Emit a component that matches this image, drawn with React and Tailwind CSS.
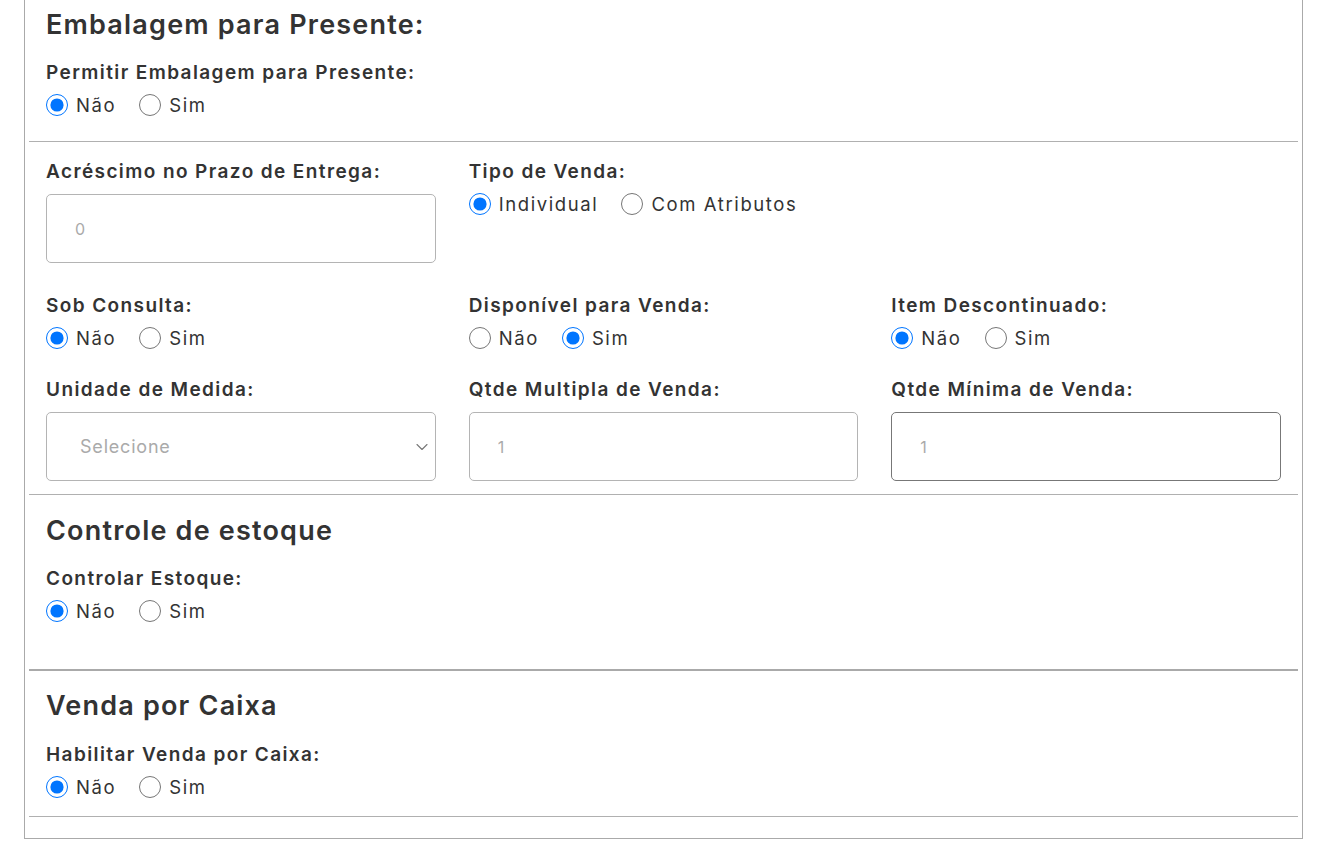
import { ChevronDown } from "lucide-react";

const font = { fontFamily: "Inter, 'Noto Sans', sans-serif" };

const RadioGroup = ({ name, options, checked }) => (
  <div className="flex items-center gap-[23px] h-6">
    {options.map((opt) => (
      <label
        key={opt}
        className="flex items-center gap-[8px] text-[18.5px] leading-6 tracking-[1.6px] text-[#333]"
      >
        <input
          type="radio"
          name={name}
          defaultChecked={opt === checked}
          className="w-[22px] h-[22px] accent-[#0075ff]"
        />
        {opt}
      </label>
    ))}
  </div>
);

const Label = ({ children }) => (
  <div className="text-[19px] leading-6 font-semibold tracking-[1.4px] text-[#333]">{children}</div>
);

const Heading = ({ children }) => (
  <h3 className="text-[27px] leading-[34px] font-semibold tracking-[1.2px] text-[#333]">{children}</h3>
);

const RadioField = ({ label, name, options = ["Não", "Sim"], checked = "Não" }) => (
  <div>
    <Label>{label}</Label>
    <div className="mt-[8px]">
      <RadioGroup name={name} options={options} checked={checked} />
    </div>
  </div>
);

const InputField = ({ label, placeholder, dark }) => (
  <div>
    <Label>{label}</Label>
    <input
      type="text"
      placeholder={placeholder}
      className={`mt-[10px] w-full h-[69px] rounded-[5px] border px-[28px] text-[16px] text-[#333] placeholder:text-[#aaa] outline-none ${
        dark ? "border-[#777]" : "border-[#b4b4b4]"
      }`}
    />
  </div>
);

export default function App() {
  return (
    <div className="min-h-screen bg-white" style={font}>
      <div className="ml-[24px] w-[1279px] border-x border-b border-[#aaa] px-[4px] pb-[21px]">
        {/* Embalagem */}
        <section className="px-[17px] pt-[8px] pb-[24px] border-b border-[#b0b0b0]">
          <Heading>Embalagem para Presente:</Heading>
          <div className="mt-[19px]">
            <RadioField label="Permitir Embalagem para Presente:" name="embalagem" />
          </div>
        </section>

        {/* Dados de venda */}
        <section className="px-[17px] pt-[18px] pb-[13px] border-b border-[#b0b0b0]">
          <div className="grid grid-cols-3 gap-x-[33px]">
            <InputField label="Acréscimo no Prazo de Entrega:" placeholder="0" />
            <RadioField
              label="Tipo de Venda:"
              name="tipo"
              options={["Individual", "Com Atributos"]}
              checked="Individual"
            />
            <div />
          </div>
          <div className="grid grid-cols-3 gap-x-[33px] mt-[31px]">
            <RadioField label="Sob Consulta:" name="consulta" />
            <RadioField label="Disponível para Venda:" name="disponivel" checked="Sim" />
            <RadioField label="Item Descontinuado:" name="descontinuado" />
          </div>
          <div className="grid grid-cols-3 gap-x-[33px] mt-[28px]">
            <div>
              <Label>Unidade de Medida:</Label>
              <div className="relative mt-[10px]">
                <select
                  defaultValue=""
                  className="w-full h-[69px] appearance-none rounded-[5px] border border-[#b4b4b4] bg-white pl-[33px] text-[18px] tracking-[0.8px] text-[#aaa] outline-none"
                >
                  <option value="">Selecione</option>
                </select>
                <ChevronDown
                  className="absolute right-[4px] top-1/2 -translate-y-1/2 w-5 h-5 text-[#777]"
                  strokeWidth={1.3}
                />
              </div>
            </div>
            <InputField label="Qtde Multipla de Venda:" placeholder="1" />
            <InputField label="Qtde Mínima de Venda:" placeholder="1" dark />
          </div>
        </section>

        {/* Controle de estoque */}
        <section className="px-[17px] pt-[19px] pb-[46px] border-b-2 border-[#aaa]">
          <Heading>Controle de estoque</Heading>
          <div className="mt-[19px]">
            <RadioField label="Controlar Estoque:" name="estoque" />
          </div>
        </section>

        {/* Venda por caixa */}
        <section className="px-[17px] pt-[18px] pb-[17px] border-b border-[#b0b0b0]">
          <Heading>Venda por Caixa</Heading>
          <div className="mt-[20px]">
            <RadioField label="Habilitar Venda por Caixa:" name="caixa" />
          </div>
        </section>
      </div>
    </div>
  );
}
